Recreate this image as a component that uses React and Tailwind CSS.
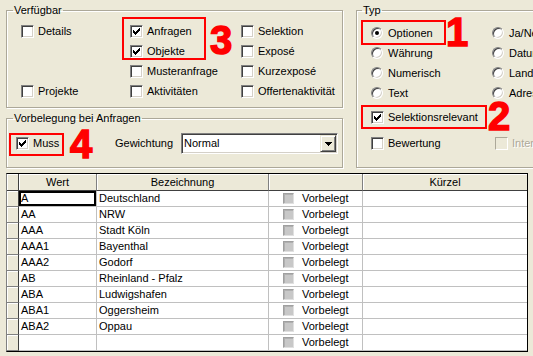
import React from 'react';

const rows = [
  ['A', 'Deutschland'],
  ['AA', 'NRW'],
  ['AAA', 'Stadt Köln'],
  ['AAA1', 'Bayenthal'],
  ['AAA2', 'Godorf'],
  ['AB', 'Rheinland - Pfalz'],
  ['ABA', 'Ludwigshafen'],
  ['ABA1', 'Oggersheim'],
  ['ABA2', 'Oppau'],
  ['', ''],
];

const Box = ({ checked, disabled }) => (
  <span
    className={`relative block w-[13px] h-[13px] shrink-0 border ${
      disabled
        ? 'border-t-[#aca899] border-l-[#aca899] border-b-white border-r-white bg-[#ECE9D8]'
        : 'border-t-[#808080] border-l-[#808080] border-b-white border-r-white bg-white shadow-[inset_1px_1px_0_#404040,inset_-1px_-1px_0_#d4d0c8]'
    }`}
  >
    {checked && (
      <svg width="7" height="7" viewBox="0 0 7 7" shapeRendering="crispEdges" className="absolute left-[2px] top-[2px]">
        <path
          d="M6 0h1v1h-1z M5 1h2v1h-2z M0 2h1v1h-1z M4 2h3v1h-3z M0 3h2v1h-2z M3 3h3v1h-3z M0 4h5v1h-5z M1 5h3v1h-3z M2 6h1v1h-1z"
          fill="#000"
        />
      </svg>
    )}
  </span>
);

const Radio = ({ checked }) => (
  <span className="relative block w-[12px] h-[12px] shrink-0 rounded-full border border-t-[#808080] border-l-[#808080] border-b-white border-r-white bg-white shadow-[inset_1px_1px_0_#404040,inset_-1px_-1px_0_#d4d0c8]">
    {checked && <span className="absolute left-[3px] top-[3px] w-[4px] h-[4px] rounded-full bg-black" />}
  </span>
);

const Item = ({ radio, checked, disabled, label, className = '' }) => (
  <div className={`flex items-center h-[20px] whitespace-nowrap ${radio ? 'gap-[5px]' : 'gap-[4px]'} ${className}`}>
    {radio ? <Radio checked={checked} /> : <Box checked={checked} disabled={disabled} />}
    <span className={disabled ? 'text-[#aca899] [text-shadow:1px_1px_0_white]' : ''}>{label}</span>
  </div>
);

const groupCls =
  'border border-[#aca899] shadow-[inset_1px_1px_0_white,1px_1px_0_white]';

const Mark = ({ className }) => (
  <div className={`absolute border-2 border-[#ff0000] ${className}`} />
);

const Num = ({ children, className }) => (
  <div
    className={`absolute text-[40px] leading-none font-bold text-[#ff0000] [-webkit-text-stroke:1.5px_#ff0000] ${className}`}
  >
    {children}
  </div>
);

const App = () => {
  return (
    <div className="relative w-[533px] h-[356px] overflow-hidden bg-[#ECE9D8] font-['Liberation_Sans',Arial,sans-serif] text-[11px] leading-[13px] text-black">
      <div className="flex pl-[6px] pt-[4px]">
        <div className="w-[337px] shrink-0">
          <fieldset className={`h-[104px] ${groupCls}`}>
            <legend className="ml-[6px] px-[1px] leading-[13px]">Verfügbar</legend>
            <div className="grid grid-cols-[109px_111px_1fr] pl-[14px] pt-[4px]">
              <Item label="Details" />
              <Item label="Anfragen" checked />
              <Item label="Selektion" />
              <div />
              <Item label="Objekte" checked />
              <Item label="Exposé" />
              <div />
              <Item label="Musteranfrage" />
              <Item label="Kurzexposé" />
              <Item label="Projekte" />
              <Item label="Aktivitäten" />
              <Item label="Offertenaktivität" />
            </div>
          </fieldset>

          <fieldset className={`mt-[4px] h-[56px] ${groupCls}`}>
            <legend className="ml-[6px] px-[1px] leading-[13px]">Vorbelegung bei Anfragen</legend>
            <div className="flex items-center h-[21px] mt-[8px] pl-[9px]">
              <div className="w-[99px] shrink-0">
                <Item label="Muss" checked />
              </div>
              <span className="w-[66px] shrink-0">Gewichtung</span>
              <div className="flex items-center justify-between w-[157px] h-[21px] bg-white border border-t-[#808080] border-l-[#808080] border-b-white border-r-white shadow-[inset_1px_1px_0_#404040,inset_-1px_-1px_0_#d4d0c8]">
                <span className="pl-[2px]">Normal</span>
                <span className="flex items-center justify-center w-[16px] h-[17px] mr-[1px] bg-[#ECE9D8] border border-t-[#ECE9D8] border-l-[#ECE9D8] border-b-[#404040] border-r-[#404040] shadow-[inset_1px_1px_0_white,inset_-1px_-1px_0_#808080]">
                  <svg width="7" height="4" viewBox="0 0 7 4" shapeRendering="crispEdges">
                    <path d="M0 0h7v1h-7z M1 1h5v1h-5z M2 2h3v1h-3z M3 3h1v1h-1z" fill="#000" />
                  </svg>
                </span>
              </div>
            </div>
          </fieldset>
        </div>

        <fieldset className={`ml-[13px] w-[200px] shrink-0 h-[164px] ${groupCls}`}>
          <legend className="ml-[5px] px-[1px] leading-[13px]">Typ</legend>
          <div className="pl-[14px] pt-[6px]">
            <div className="grid grid-cols-[121px_1fr]">
              <Item radio checked label="Optionen" />
              <Item radio label="Ja/Nein" />
              <Item radio label="Währung" />
              <Item radio label="Datum" />
              <Item radio label="Numerisch" />
              <Item radio label="Land" />
              <Item radio label="Text" />
              <Item radio label="Adresse" />
            </div>
            <Item label="Selektionsrelevant" checked className="mt-[4px]" />
            <div className="grid grid-cols-[121px_1fr] mt-[6px]">
              <Item label="Bewertung" />
              <Item label="Intern" disabled className="ml-[3px]" />
            </div>
          </div>
        </fieldset>
      </div>

      <div className="mt-[5px] ml-[6px] w-[522px] border border-black border-l-[#808080] bg-white">
        <div className="flex h-[17px]">
          <div className="w-[12px] shrink-0 bg-[#ECE9D8] border-r border-b border-r-[#404040] border-b-[#404040] shadow-[inset_1px_1px_0_white]" />
          {[
            ['Wert', 'w-[78px]'],
            ['Bezeichnung', 'w-[172px]'],
            ['', 'w-[94px]'],
            ['Kürzel', 'flex-1'],
          ].map(([h, w], i) => (
            <div
              key={i}
              className={`${w} shrink-0 flex items-center justify-center bg-[#ECE9D8] border-b border-b-[#404040] ${
                i < 3 ? 'border-r border-r-[#808080]' : ''
              } shadow-[inset_1px_1px_0_white]`}
            >
              {h}
            </div>
          ))}
        </div>
        {rows.map(([wert, bez], i) => (
          <div key={i} className="flex h-[16px]">
            <div className="w-[12px] shrink-0 bg-[#ECE9D8] border-r border-b border-r-[#404040] border-b-[#808080] shadow-[inset_1px_1px_0_white]" />
            <div
              className={`w-[78px] shrink-0 flex items-center pl-[2px] border-r border-b border-[#c0c0c0] ${
                i === 0 ? 'shadow-[inset_0_0_0_2px_black]' : ''
              }`}
            >
              {wert}
            </div>
            <div className="w-[172px] shrink-0 flex items-center pl-[2px] border-r border-b border-[#c0c0c0]">{bez}</div>
            <div className="w-[94px] shrink-0 flex items-center gap-[8px] pl-[14px] border-r border-b border-[#c0c0c0]">
              <span className="block w-[11px] h-[11px] bg-[#c8c8c8] border border-t-[#a0a0a0] border-l-[#a0a0a0] border-b-[#e0e0e0] border-r-[#e0e0e0] shadow-[inset_1px_1px_0_#b0b0b0]" />
              <span>Vorbelegt</span>
            </div>
            <div className="flex-1 border-b border-[#c0c0c0]" />
          </div>
        ))}
      </div>

      <Mark className="left-[122px] top-[17px] w-[84px] h-[43px]" />
      <Mark className="left-[361px] top-[20px] w-[85px] h-[25px]" />
      <Mark className="left-[361px] top-[105px] w-[126px] h-[24px]" />
      <Mark className="left-[9px] top-[133px] w-[55px] h-[23px]" />
      <Num className="left-[446px] top-[12px]">1</Num>
      <Num className="left-[488px] top-[96px]">2</Num>
      <Num className="left-[210px] top-[20px]">3</Num>
      <Num className="left-[70px] top-[124px]">4</Num>
    </div>
  );
};

export default App;
